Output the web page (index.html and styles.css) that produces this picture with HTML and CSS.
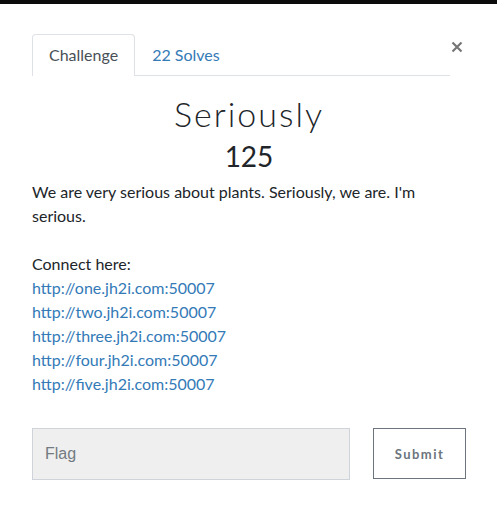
FILE: index.html
```html
<!DOCTYPE html>
<html>
<head>
<meta charset="utf-8">
<link rel="stylesheet" href="styles.css">
</head>
<body>
<div class="topbar"></div>
<div class="modal">
  <div class="header">
    <ul class="tabs">
      <li class="tab active">Challenge</li>
      <li class="tab link">22 Solves</li>
    </ul>
    <button class="close" aria-label="Close">
      <svg width="12" height="12" viewBox="0 0 12 12"><path d="M1.5 1.5L10.5 10.5M10.5 1.5L1.5 10.5" stroke="#777" stroke-width="2.2" stroke-linecap="butt"/></svg>
    </button>
  </div>
  <h2 class="title">Seriously</h2>
  <h3 class="value">125</h3>
  <div class="desc">
    <p>We are very serious about plants. Seriously, we are. I'm serious.</p>
    <p class="connect">Connect here:<br>
      <a href="#">http://one.jh2i.com:50007</a><br>
      <a href="#">http://two.jh2i.com:50007</a><br>
      <a href="#">http://three.jh2i.com:50007</a><br>
      <a href="#">http://four.jh2i.com:50007</a><br>
      <a href="#">http://five.jh2i.com:50007</a>
    </p>
  </div>
  <div class="form">
    <input class="flag" type="text" placeholder="Flag">
    <button class="submit">Submit</button>
  </div>
</div>
</body>
</html>
```
FILE: styles.css
```css
html, body {
  margin: 0;
  padding: 0;
  background: #fff;
}
body {
  font-family: Lato, "Liberation Sans", sans-serif;
  color: #212529;
  width: 497px;
  height: 527px;
  overflow: hidden;
}
.topbar {
  height: 4px;
  background: #0b0b0b;
}
.modal {
  padding: 30px 31px 0 32px;
}
.header {
  display: flex;
  align-items: flex-start;
}
.tabs {
  flex: 1;
  display: flex;
  list-style: none;
  margin: 0;
  padding: 0;
  border-bottom: 1px solid #dee2e6;
}
.tab {
  padding: 8px 16px 9px;
  font-size: 16px;
  line-height: 24px;
  border: 1px solid transparent;
  border-bottom: 0;
  border-radius: 4px 4px 0 0;
  margin-bottom: -1px;
}
.tab.active {
  color: #495057;
  border-color: #dee2e6;
  background: #fff;
}
.tab.link {
  color: #337ab7;
}
.close {
  width: 14px;
  padding: 0;
  margin: 7px 2px 0 0;
  border: 0;
  background: none;
  display: flex;
  justify-content: center;
}
.title {
  margin: 18px 0 0;
  text-align: center;
  font-weight: 300;
  font-size: 34px;
  line-height: 40px;
  letter-spacing: 2px;
  color: #212529;
}
.value {
  margin: 5px 0 0;
  text-align: center;
  font-weight: 400;
  font-size: 28px;
  line-height: 34px;
}
.desc {
  margin-top: 7px;
  font-size: 16px;
  line-height: 24px;
}
.desc p {
  margin: 0;
}
.desc .connect {
  margin-top: 24px;
}
.desc a {
  color: #337ab7;
  text-decoration: none;
}
.form {
  display: flex;
  gap: 23px;
  margin-top: 32px;
}
.flag {
  width: 318px;
  height: 52px;
  box-sizing: border-box;
  border: 1px solid #ced4da;
  background: #efefef;
  padding: 0 12px;
  font-family: "Liberation Sans", Arial, sans-serif;
  font-size: 16px;
  margin: 0;
}
.flag::placeholder {
  color: #737b82;
}
.submit {
  width: 93px;
  height: 51px;
  box-sizing: border-box;
  border: 1px solid #6c757d;
  background: #fff;
  color: #6c757d;
  font-family: Lato, sans-serif;
  font-weight: 700;
  font-size: 13px;
  letter-spacing: 1.5px;
  padding: 0;
}
```
